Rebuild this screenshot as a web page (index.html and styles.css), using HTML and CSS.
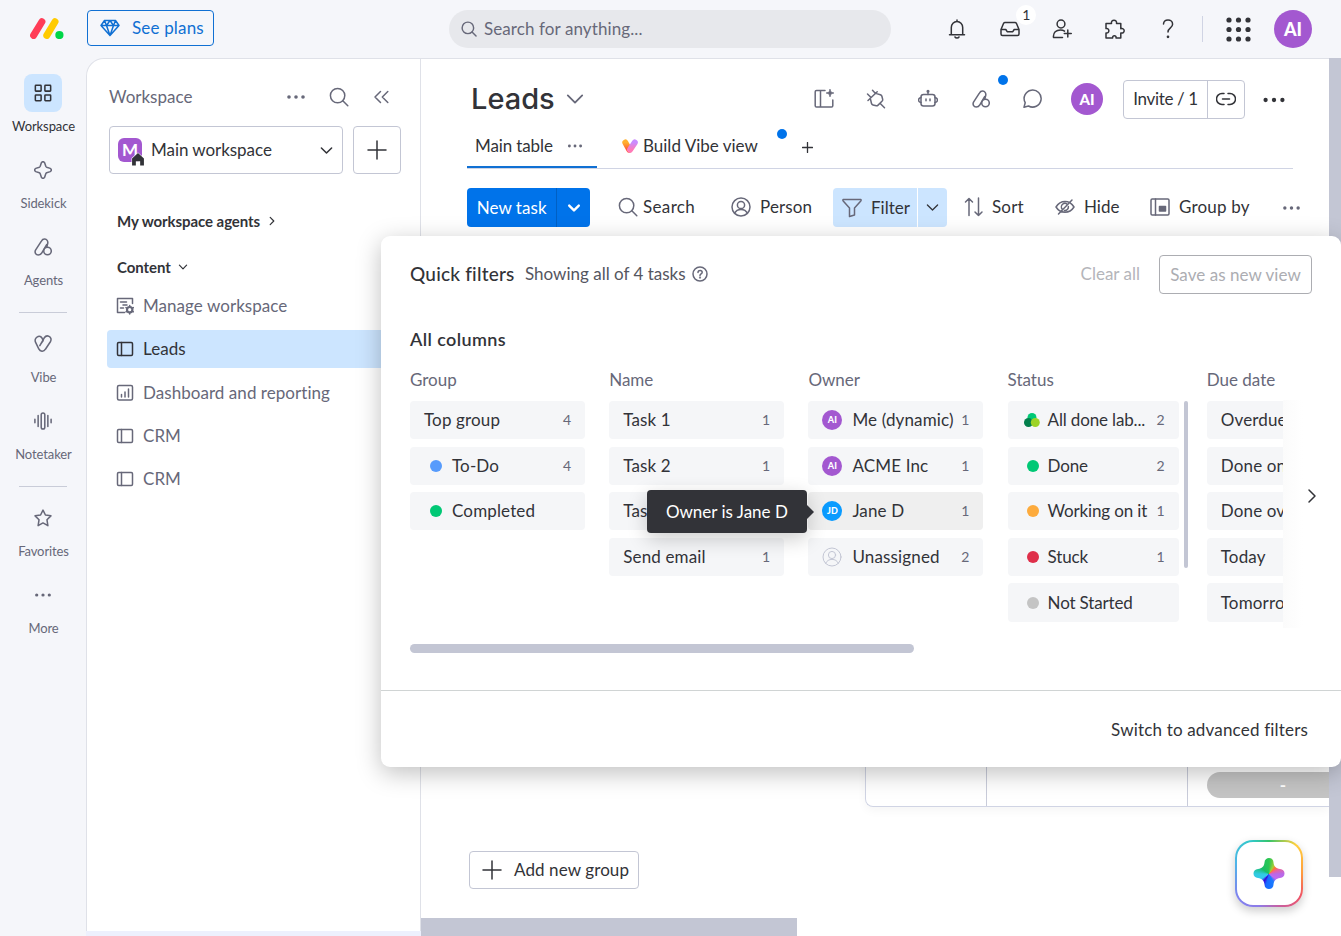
FILE: index.html
```html
<!DOCTYPE html>
<html lang="en">
<head>
  <meta charset="UTF-8">
  <meta name="viewport" content="width=device-width, initial-scale=1.0">
  <title>Leads</title>
  <link rel="stylesheet" href="styles.css">
</head>
<body>
  <!-- Icon sprite -->
  <svg class="sprite" aria-hidden="true">
    <symbol id="i-search" viewBox="0 0 20 20"><circle cx="8.6" cy="8.6" r="7.2"/><path d="M13.8 13.8L18.8 18.8"/></symbol>
    <symbol id="i-down" viewBox="0 0 20 20"><path d="M4 7l6 6 6-6"/></symbol>
    <symbol id="i-right" viewBox="0 0 20 20"><path d="M7 4l6 6-6 6"/></symbol>
    <symbol id="i-plus" viewBox="0 0 20 20"><path d="M10 1v18M1 10h18"/></symbol>
    <symbol id="i-dots" viewBox="0 0 20 20"><g fill="currentColor" stroke="none"><circle cx="3" cy="10" r="1.8"/><circle cx="10" cy="10" r="1.8"/><circle cx="17" cy="10" r="1.8"/></g></symbol>
    <symbol id="i-agents" viewBox="0 0 20 20"><path d="M14.3 9.9L15.2 6.2C15.9 3.2 14 1.3 12 1.2c-1.7-.1-3 .8-3.8 2.2L1.7 13.5c-1.2 2.3 0 5.3 3 5.3 2 0 3.2-1 4-2.4l5.5-9.2"/><circle cx="15" cy="14.5" r="4.2"/></symbol>
    <symbol id="i-board" viewBox="0 0 18 18"><rect x="1.5" y="2.5" width="15" height="13" rx="1.2"/><path d="M5.5 2.5v13"/></symbol>
    <symbol id="i-person" viewBox="0 0 20 20"><circle cx="10" cy="10" r="9"/><circle cx="10" cy="8" r="3.6"/><path d="M3.6 16.3c1.2-2.6 3.5-3.9 6.4-3.9s5.2 1.3 6.4 3.9"/></symbol>
  </svg>

  <header class="topbar">
    <svg class="logo" viewBox="0 0 34 21"><path d="M3.6 17.4L11.9 3.7" stroke="#ff3d57" stroke-width="7"/><path d="M16.8 17.4L25 3.7" stroke="#ffcb00" stroke-width="7"/><circle cx="29.4" cy="17" r="4.1" fill="#00d647" stroke="none"/></svg>
    <button class="plans-button">
      <svg viewBox="0 0 20 18"><path d="M4.5 1.5h11L19 6.5 10 16.5 1 6.5zM1 6.5h18M6.5 6.5l3.5 10 3.5-10L10 1.5 6.5 6.5 4.5 1.5M13.5 6.5l2-5"/></svg>
      <span>See plans</span>
    </button>
    <div class="global-search">
      <svg><use href="#i-search"/></svg>
      <span>Search for anything...</span>
    </div>
    <nav class="top-actions">
      <div class="top-action"><svg viewBox="0 0 20 20"><path d="M2.5 15.8h15M4.3 15.6V8.500a5.700 6 0 0 1 11.400 0v7.100M10 2.300V1M8 18c.8 1.300 3.200 1.300 4 0"/></svg></div>
      <div class="top-action"><svg viewBox="0 0 20 20"><path d="M1 10.500L3.500 4.500Q4 3.500 5 3.500h10q1 0 1.500 1L19 10.500V15q0 1.500-1.500 1.500h-15Q1 16.500 1 15zM1 10.500h4.800l1.400 2.200h5.600l1.400-2.200H19"/></svg><span class="inbox-count">1</span></div>
      <div class="top-action"><svg viewBox="0 0 20 20"><circle cx="9" cy="5" r="3.9"/><path d="M10.500 18.500H1.500c-.6-5 2.800-7.600 7-7.600 1.600 0 3 .4 4 1.200M15.800 11v7M12.300 14.500h7"/></svg></div>
      <div class="top-action"><svg viewBox="0 0 20 20"><path d="M1 4.500h5.500c-1-4.500 6-4.500 5 0h4.300v5.200c4.500-1.200 4.500 5.300 0 4.300v5H11c.8-3-4-3-3.300 0H1v-5c3.800.8 3.800-5.300 0-4.400z"/></svg></div>
      <div class="top-action"><svg viewBox="0 0 20 20"><path d="M5.500 5c.2-2.500 2-4 4.500-4s4.600 1.700 4.600 4.200c0 3.800-4.600 3.500-4.600 7.800"/><circle cx="10" cy="17.8" r=".6" fill="currentColor"/></svg></div>
      <span class="top-divider"></span>
      <svg class="apps" viewBox="0 0 25 25"><circle cx="3" cy="3" r="2.600"/><circle cx="12.500" cy="3" r="2.600"/><circle cx="22" cy="3" r="2.600"/><circle cx="3" cy="12.500" r="2.600"/><circle cx="12.500" cy="12.500" r="2.600"/><circle cx="22" cy="12.500" r="2.600"/><circle cx="3" cy="22" r="2.600"/><circle cx="12.500" cy="22" r="2.600"/><circle cx="22" cy="22" r="2.600"/></svg>
      <div class="avatar avatar-large">AI</div>
    </nav>
  </header>

  <div class="layout">
    <nav class="rail">
      <div class="rail-item active"><div class="rail-icon"><svg viewBox="0 0 20 20"><rect x="1.500" y="1.500" width="6.400" height="6.400" rx=".6"/><rect x="12.100" y="1.500" width="6.400" height="6.400" rx=".6"/><rect x="1.500" y="12.100" width="6.400" height="6.400" rx=".6"/><rect x="12.100" y="12.100" width="6.400" height="6.400" rx=".6"/></svg></div><span>Workspace</span></div>
      <div class="rail-item"><div class="rail-icon"><svg viewBox="0 0 20 20"><path d="M8.200 2q1.800-2.600 3.600 0l1.300 3.900q.3.700 1 1l3.900 1.300q2.600 1.800 0 3.600l-3.900 1.300q-.7.300-1 1l-1.300 3.900q-1.800 2.600-3.600 0l-1.300-3.900q-.3-.7-1-1L2 11.800q-2.600-1.800 0-3.600l3.900-1.300q.7-.3 1-1z"/></svg></div><span>Sidekick</span></div>
      <div class="rail-item"><div class="rail-icon"><svg><use href="#i-agents"/></svg></div><span>Agents</span></div>
      <hr>
      <div class="rail-item"><div class="rail-icon"><svg viewBox="0 0 20 20"><path d="M10.200 6.300C8.800 1.500 6.500 1 4.600 1.700 1.500 2.800.6 5.600 1.800 8.200l3.500 7.300c1.500 3 5.500 3.600 7.400.3l5.500-8.300c1.500-2.600.5-5-1.500-6-2-1-4-.3-5.300 1.600L6.500 11.800M10.200 6.300L7.500 10.200"/></svg></div><span>Vibe</span></div>
      <div class="rail-item"><div class="rail-icon"><svg viewBox="0 0 20 20"><rect x="8" y="1" width="4" height="18" rx="2"/><path d="M4.600 4v12M15.400 4v12M1 8v4M19 8v4"/></svg></div><span>Notetaker</span></div>
      <hr>
      <div class="rail-item"><div class="rail-icon"><svg viewBox="0 0 20 20"><path d="M10 1.200l2.700 5.500 6.100.9-4.400 4.300 1 6.600L10 15.500l-5.400 3 1-6.600L1.200 7.600l6.100-.9z"/></svg></div><span>Favorites</span></div>
      <div class="rail-item"><div class="rail-icon"><svg><use href="#i-dots"/></svg></div><span>More</span></div>
    </nav>

    <aside class="workspace">
      <div class="workspace-head">
        <span>Workspace</span>
        <svg><use href="#i-dots"/></svg>
        <svg><use href="#i-search"/></svg>
        <svg viewBox="0 0 20 20"><path d="M8.500 4.500L3 10l5.500 5.500M15.800 4.500L10.300 10l5.500 5.500"/></svg>
      </div>
      <div class="workspace-picker">
        <div class="picker">
          <div class="workspace-badge">M<svg viewBox="0 0 13 13"><path d="M1 6L6.500 1 12 6v6.500H8.500V8.500h-4v4H1z"/></svg></div>
          <span>Main workspace</span>
          <svg class="picker-arrow"><use href="#i-down"/></svg>
        </div>
        <button class="add-button"><svg><use href="#i-plus"/></svg></button>
      </div>
      <div class="section-title agents-title">My workspace agents <svg><use href="#i-right"/></svg></div>
      <div class="section-title">Content <svg><use href="#i-down"/></svg></div>
      <ul class="boards">
        <li><svg viewBox="0 0 18 18"><path d="M8.500 15.500H1.500v-14h15v5M4.500 5h6M7 8h4M4.500 11h3"/><circle cx="13.700" cy="12.700" r="2.700" stroke-width="2.200"/><path d="M13.700 8.500v1M13.700 16v1M10 10.600l.8.500M16.600 14.300l.8.500M17.400 10.600l-.8.500M10.800 14.300l-.8.500"/></svg>Manage workspace</li>
        <li class="selected"><svg><use href="#i-board"/></svg>Leads</li>
        <li><svg viewBox="0 0 18 18"><rect x="1.500" y="1.500" width="15" height="14.500" rx="1.500"/><path d="M5.500 10.500v2.500M9 8v5M12.500 5v8"/></svg>Dashboard and reporting</li>
        <li><svg><use href="#i-board"/></svg>CRM</li>
        <li><svg><use href="#i-board"/></svg>CRM</li>
      </ul>
    </aside>

    <main class="board">
      <div class="board-head">
        <h1>Leads</h1>
        <svg class="title-arrow"><use href="#i-down"/></svg>
        <div class="board-actions">
          <div><svg viewBox="0 0 20 20"><path d="M11 1.500H2.500q-1.300 0-1.300 1.300v14q0 1.300 1.300 1.300h15q1.300 0 1.300-1.300V11M6.500 1.500v16.600"/><path d="M16 0l1 3 3 1-3 1-1 3-1-3-3-1 3-1z" fill="currentColor" stroke-width=".6"/></svg></div>
          <div><svg viewBox="0 0 20 20"><path d="M2 11.500L11.200 2.800M1.500 5l3.300 3.300M6.500 1.200l3 3.200M4.300 9.300l1.200 5.200q.3 1.200 1.500 1.500l3.300.8q.9.200 1.500-.4l4.400-4.400q.7-.6.500-1.500l-.8-3.200q-.3-1.100-1.500-1.500L9.700 4.400M14.500 14.700l4 4"/></svg></div>
          <div><svg viewBox="0 0 20 20"><rect x="3" y="5.500" width="14" height="11.500" rx="2.500"/><path d="M10 5.500V2.500M8 10v1.800M12 10v1.800M3 8.500Q.5 9 .5 11t2.500 2.500M17 8.500q2.500.5 2.500 2.500T17 13.500"/><circle cx="10" cy="2.300" r=".8"/></svg></div>
          <div><svg class="agents-icon"><use href="#i-agents"/></svg><i class="dot"></i></div>
          <div><svg viewBox="0 0 20 20"><path d="M1 18.200l1.200-4.500a8.500 8.500 0 1 1 3.300 3.300z"/></svg></div>
        </div>
        <div class="avatar">AI</div>
        <div class="invite"><span>Invite / 1</span><span class="link"><svg viewBox="0 0 20 20"><path d="M8 4.500H6a5.500 5.500 0 0 0 0 11h2M12 4.500h2a5.500 5.500 0 0 1 0 11h-2M6.500 10h7"/></svg></span></div>
        <svg class="board-more"><use href="#i-dots"/></svg>
      </div>

      <div class="tabs">
        <div class="tab active"><span>Main table</span><svg><use href="#i-dots"/></svg></div>
        <div class="tab vibe">
          <svg viewBox="0 0 16 14"><defs><linearGradient id="warm" x2="0" y2="1"><stop stop-color="#ffb02e"/><stop offset="1" stop-color="#ff5a36"/></linearGradient><linearGradient id="pink" x2="0" y2="1"><stop stop-color="#c98bff"/><stop offset="1" stop-color="#ff7ab8"/></linearGradient></defs><path d="M3.300 3.500l4 7.200" stroke="url(#warm)"/><path d="M12.800 3.500l-4.700 7.200" stroke="url(#pink)"/></svg>
          <span>Build Vibe view</span><i class="dot"></i>
        </div>
        <svg class="tab-add"><use href="#i-plus"/></svg>
      </div>

      <div class="toolbar">
        <div class="new-task"><span>New task</span><span class="new-task-arrow"><svg><use href="#i-down"/></svg></span></div>
        <div class="tool tool-search"><svg><use href="#i-search"/></svg>Search</div>
        <div class="tool tool-person"><svg><use href="#i-person"/></svg>Person</div>
        <div class="filter"><span><svg viewBox="0 0 20 20"><path d="M1.200 1.500h17.600q.6.800 0 1.500L12.500 10v7l-5 1.500V10L1.200 3q-.6-.7 0-1.500z"/></svg>Filter</span><span class="filter-arrow"><svg><use href="#i-down"/></svg></span></div>
        <div class="tool tool-sort"><svg viewBox="0 0 20 20"><path d="M5 18.500V1.500M1.500 5l3.500-3.500L8.500 5M14.500 1v17.500M11 15l3.500 3.500L18 15"/></svg>Sort</div>
        <div class="tool tool-hide"><svg viewBox="0 0 20 20"><path d="M1 10c4.500-7.500 13.500-7.500 18 0-4.500 7-13.500 7-18 0zM3.500 17L17 3M12.500 7.500a3.500 3.500 0 0 0-5.200 4.700M13.400 9.500a3.500 3.500 0 0 1-4 3.900"/></svg>Hide</div>
        <div class="tool tool-group"><svg viewBox="0 0 20 20"><rect x="1" y="2" width="18" height="16" rx="1.200"/><path d="M5.500 2v16"/><rect x="9.500" y="9.500" width="6" height="4.500" fill="currentColor"/></svg>Group by</div>
        <svg class="tool-more"><use href="#i-dots"/></svg>
      </div>

      <div class="table">
        <div class="cell"></div>
        <div class="cell"></div>
        <div class="cell"><div class="summary">-</div></div>
      </div>
      <button class="add-group"><svg><use href="#i-plus"/></svg>Add new group</button>
      <div class="scroll-x"></div>
    </main>
    <div class="scroll-y"></div>
  </div>

  <section class="popover">
    <div class="popover-head">
      <h2>Quick filters</h2>
      <span class="showing">Showing all of 4 tasks</span>
      <svg viewBox="0 0 16 16"><circle cx="8" cy="8" r="7"/><path d="M6 6.500c0-2.900 4.200-2.600 4.200-.2C10.200 8 8 7.700 8 9.500"/><circle cx="8" cy="11.600" r=".4"/></svg>
      <span class="clear-all">Clear all</span>
      <button class="save-view">Save as new view</button>
    </div>
    <h3>All columns</h3>
    <div class="columns-wrap">
      <div class="columns">
        <div class="column">
          <h4>Group</h4>
          <div class="option"><span>Top group</span><em>4</em></div>
          <div class="option status"><i class="blue"></i><span>To-Do</span><em>4</em></div>
          <div class="option status"><i class="green"></i><span>Completed</span></div>
        </div>
        <div class="column">
          <h4>Name</h4>
          <div class="option"><span>Task 1</span><em>1</em></div>
          <div class="option"><span>Task 2</span><em>1</em></div>
          <div class="option"><span>Task 3</span></div>
          <div class="option"><span>Send email</span><em>1</em></div>
        </div>
        <div class="column">
          <h4>Owner</h4>
          <div class="option"><b class="mini">AI</b><span>Me (dynamic)</span><em>1</em></div>
          <div class="option"><b class="mini">AI</b><span>ACME Inc</span><em>1</em></div>
          <div class="option hovered"><b class="mini jd">JD</b><span>Jane D</span><em>1</em><div class="tooltip">Owner is Jane D</div></div>
          <div class="option"><svg class="nobody"><use href="#i-person"/></svg><span>Unassigned</span><em>2</em></div>
        </div>
        <div class="column scrollable">
          <h4>Status</h4>
          <div class="option status"><svg class="done-labels" viewBox="0 0 16 14"><circle cx="8" cy="4.500" r="4.500" fill="#00c875"/><circle cx="4.500" cy="9.500" r="4.500" fill="#037f4c"/><circle cx="11.300" cy="9.500" r="4.500" fill="#9cd326"/></svg><span>All done lab...</span><em>2</em></div>
          <div class="option status"><i class="green"></i><span>Done</span><em>2</em></div>
          <div class="option status"><i class="orange"></i><span>Working on it</span><em>1</em></div>
          <div class="option status"><i class="red"></i><span>Stuck</span><em>1</em></div>
          <div class="option status"><i class="gray"></i><span>Not Started</span></div>
          <div class="column-scroll"></div>
        </div>
        <div class="column">
          <h4>Due date</h4>
          <div class="option"><span>Overdue</span></div>
          <div class="option"><span>Done on time</span></div>
          <div class="option"><span>Done overdue</span></div>
          <div class="option"><span>Today</span></div>
          <div class="option"><span>Tomorrow</span></div>
        </div>
      </div>
      <svg class="columns-next"><use href="#i-right"/></svg>
    </div>
    <div class="columns-scroll"></div>
    <footer>Switch to advanced filters</footer>
  </section>

  <div class="sidekick"><div class="star"></div></div>
</body>
</html>
```
FILE: styles.css
```css
* {
  margin: 0;
  padding: 0;
  box-sizing: border-box;
}

body {
  position: relative;
  width: 1341px;
  height: 936px;
  overflow: hidden;
  display: flex;
  flex-direction: column;
  font-family: Lato, "Liberation Sans", sans-serif;
  font-size: 17px;
  line-height: 20px;
  color: #323338;
  background: #f5f6fa;
  white-space: nowrap;
}

button {
  font: inherit;
  letter-spacing: inherit;
  color: inherit;
  background: white;
  border: 1px solid #c3c6d4;
  border-radius: 4px;
}

svg {
  display: block;
  flex: none;
  width: 20px;
  height: 20px;
  fill: none;
  stroke: currentColor;
  stroke-width: 1.5;
  stroke-linecap: round;
  stroke-linejoin: round;
}

.sprite {
  display: none;
}

.avatar {
  flex: none;
  width: 32px;
  height: 32px;
  border-radius: 50%;
  background: #a358d0;
  color: white;
  font-weight: 900;
  font-size: 15px;
  line-height: 32px;
  text-align: center;
}

.avatar-large {
  width: 38px;
  height: 38px;
  font-size: 18px;
  line-height: 38px;
}

.dot {
  position: absolute;
  width: 10px;
  height: 10px;
  border-radius: 50%;
  background: #0073ea;
}

/* Top bar */
.topbar {
  flex: none;
  height: 58px;
  padding: 0 29px 0 30px;
  display: flex;
  align-items: center;
}

.logo {
  width: 34px;
  height: 21px;
  margin-top: -2px;
}

.plans-button {
  width: 127px;
  height: 36px;
  margin: -2px 0 0 23px;
  padding-left: 12px;
  display: flex;
  align-items: center;
  gap: 12px;
  background: transparent;
  border-color: #1070d3;
  color: #1070d3;
  letter-spacing: 0.17px;
}

.plans-button svg {
  width: 20px;
  height: 18px;
}

.global-search {
  width: 442px;
  height: 38px;
  margin-left: 235px;
  padding-left: 12px;
  display: flex;
  align-items: center;
  gap: 7px;
  border-radius: 19px;
  background: #e7e8ec;
  color: #676879;
  letter-spacing: 0.1px;
}

.global-search svg {
  width: 16px;
  height: 16px;
  stroke-width: 1.8;
}

.top-actions {
  display: flex;
  align-items: center;
  margin-left: 40px;
}

.top-action {
  position: relative;
  width: 52.7px;
  display: flex;
  justify-content: center;
}

.inbox-count {
  position: absolute;
  left: 33px;
  top: -14px;
  width: 20px;
  height: 20px;
  border-radius: 50%;
  background: white;
  font-size: 14px;
  text-align: center;
}

.top-divider {
  width: 1px;
  height: 26px;
  margin-left: 8px;
  background: #d0d4e4;
}

.apps {
  width: 25px;
  height: 25px;
  margin: 0 23px;
  fill: currentColor;
  stroke: none;
}

/* Left rail */
.layout {
  flex: 1;
  display: flex;
}

.rail {
  width: 86px;
  padding-top: 16px;
  color: #676879;
}

.rail-item {
  height: 77px;
  display: flex;
  flex-direction: column;
  align-items: center;
  gap: 6px;
  font-size: 13px;
  line-height: 17px;
  letter-spacing: -0.1px;
}

.rail-item.active {
  color: #323338;
}

.rail-item span {
  margin-left: 1px;
}

.rail-icon {
  width: 38px;
  height: 38px;
  border-radius: 8px;
  display: flex;
  align-items: center;
  justify-content: center;
}

.active .rail-icon {
  background: #cce5ff;
}

.rail-icon svg {
  width: 18px;
  height: 18px;
  stroke-width: 1.7;
}

.rail hr {
  width: 48px;
  height: 1px;
  margin: 7px auto 12px;
  border: 0;
  background: #c9ccd8;
}

/* Workspace panel */
.workspace {
  width: 335px;
  height: 873px;
  padding-left: 22px;
  border: 1px solid #dfe1e8;
  border-bottom: 0;
  border-top-left-radius: 18px;
  background: white;
  box-shadow: 0 5px 0 #edf0fd;
}

.workspace-head {
  height: 67px;
  padding: 9px 28px 0 0;
  display: flex;
  align-items: center;
  color: #676879;
}

.workspace-head span {
  flex: 1;
}

.workspace-head svg {
  margin-left: 23px;
}

.workspace-picker {
  display: flex;
  gap: 10px;
}

.picker {
  width: 234px;
  height: 48px;
  padding: 0 8px;
  display: flex;
  align-items: center;
  border: 1px solid #c3c6d4;
  border-radius: 4px;
  letter-spacing: -0.05px;
}

.picker-arrow {
  width: 17px;
  height: 17px;
  margin-left: auto;
  margin-right: -1px;
  stroke-width: 1.8;
}

.workspace-badge {
  position: relative;
  width: 24px;
  height: 24px;
  margin-right: 9px;
  border-radius: 6px;
  background: #a358d0;
  color: white;
  font-weight: bold;
  line-height: 23px;
  text-align: center;
}

.workspace-badge svg {
  position: absolute;
  left: 13px;
  top: 14px;
  width: 14px;
  height: 14px;
  fill: #323338;
  stroke: white;
  stroke-width: 1;
  paint-order: stroke;
}

.add-button {
  width: 48px;
  height: 48px;
  display: flex;
  align-items: center;
  justify-content: center;
}

.section-title {
  margin: 26px 0 0 8px;
  display: flex;
  align-items: center;
  gap: 6px;
  font-size: 15px;
  font-weight: bold;
  letter-spacing: -0.07px;
}

.section-title svg {
  width: 12px;
  height: 12px;
  stroke-width: 2;
}

.agents-title {
  margin-top: 37px;
}

.boards {
  margin: 10px 0 0 -2px;
  list-style: none;
  color: #676879;
  letter-spacing: 0.05px;
}

.boards li {
  height: 38px;
  margin-bottom: 5.3px;
  padding-left: 9px;
  display: flex;
  align-items: center;
  gap: 9px;
}

.boards svg {
  width: 18px;
  height: 18px;
}

.boards .selected {
  background: #cce5ff;
  color: #323338;
  border-radius: 4px;
}

/* Board */
.board {
  width: 908px;
  padding-left: 46px;
  border-top: 1px solid #dfe1e8;
  background: white;
  overflow: hidden;
  display: flex;
  flex-direction: column;
}

.board-head {
  height: 80px;
  display: flex;
  align-items: center;
}

h1 {
  width: 85px;
  margin-left: 4px;
  font-family: Inter, Lato, sans-serif;
  font-size: 29px;
  font-weight: 550;
  line-height: 36px;
}

.title-arrow {
  width: 24px;
  height: 24px;
  margin-left: 7px;
  color: #676879;
}

.board-actions {
  display: flex;
  margin-left: 211px;
  color: #676879;
}

.board-actions div {
  position: relative;
  width: 52.2px;
  display: flex;
  justify-content: center;
}

.board-actions .agents-icon {
  width: 18px;
  height: 18px;
  margin-top: 1px;
  stroke-width: 1.7;
}

.board-actions .dot {
  right: -1px;
  top: -14px;
}

.board-head .avatar {
  margin-left: 12px;
}

.invite {
  width: 122px;
  height: 39px;
  margin-left: 20px;
  display: flex;
  align-items: center;
  border: 1px solid #c3c6d4;
  border-radius: 4px;
  letter-spacing: -0.35px;
}

.invite span {
  width: 84px;
  text-align: center;
}

.invite .link {
  width: 37px;
  height: 37px;
  border-left: 1px solid #c3c6d4;
  display: flex;
  align-items: center;
  justify-content: center;
}

.board-more {
  width: 24px;
  height: 24px;
  margin: 1px 0 0 17px;
}

.tabs {
  height: 30px;
  width: 826px;
  display: flex;
  border-bottom: 1px solid #d0d4e4;
}

.tab {
  position: relative;
  height: 29px;
  padding: 0 8px;
  display: flex;
  align-items: flex-start;
}

.tab.active {
  width: 130px;
  justify-content: space-between;
  border-bottom: 2px solid #1070d3;
}

.tab.active svg {
  width: 16px;
  height: 16px;
  margin: -1px 6px 0 0;
  color: #676879;
}

.tab span {
  margin-top: -3px;
}

.tab.active span {
  letter-spacing: -0.12px;
}

.vibe {
  width: 185px;
  margin-left: 17px;
  gap: 5px;
}

.vibe svg {
  width: 16px;
  height: 14px;
  stroke-width: 6;
}

.vibe .dot {
  right: 12px;
  top: -10px;
}

.tab-add {
  width: 11px;
  height: 11px;
  margin: 3px 0 0 3px;
  stroke-width: 2.4;
}

.toolbar {
  height: 39px;
  margin-top: 19px;
  display: flex;
}

.new-task {
  width: 123px;
  height: 39px;
  display: flex;
  align-items: center;
  background: #0073ea;
  border-radius: 4px;
  color: white;
  letter-spacing: 0.05px;
}

.new-task span {
  width: 90px;
  text-align: center;
}

.new-task .new-task-arrow {
  width: 34px;
  height: 39px;
  display: flex;
  align-items: center;
  justify-content: center;
  border-left: 1px solid #0060c4;
}

.new-task svg {
  width: 16px;
  height: 16px;
  stroke-width: 3;
}

.tool {
  height: 38px;
  display: flex;
  align-items: center;
}

.tool svg {
  color: #676879;
}

.tool-search {
  width: 112px;
  margin-left: 28px;
  gap: 5px;
  letter-spacing: 0.35px;
}

.tool-person {
  width: 102px;
  margin-left: 1px;
  gap: 9px;
  letter-spacing: 0.15px;
}

.filter {
  width: 114px;
  height: 39px;
  display: flex;
  background: #cce5ff;
  border-radius: 4px;
}

.filter span {
  width: 84px;
  padding-left: 9px;
  display: flex;
  align-items: center;
  gap: 9px;
}

.filter span svg {
  color: #676879;
}

.filter .filter-arrow {
  width: 30px;
  padding-left: 6px;
  border-left: 1px solid white;
}

.filter .filter-arrow svg {
  width: 17px;
  height: 17px;
  color: #323338;
}

.tool-sort {
  width: 90px;
  margin-left: 17px;
  gap: 8px;
  letter-spacing: 0.2px;
}

.tool-hide {
  width: 95px;
  margin-left: 1px;
  gap: 9px;
}

.tool-group {
  width: 132px;
  gap: 9px;
  letter-spacing: 0.2px;
}

.tool-more {
  width: 19px;
  margin-top: 10px;
  color: #676879;
}

.table {
  flex: none;
  width: 464px;
  height: 181px;
  margin: 399px 0 0 398px;
  display: flex;
  border: 1px solid #d0d4e4;
  border-right: 0;
  border-radius: 0 0 0 8px;
  box-shadow: 0 4px 10px rgba(0,0,0,0.04);
}

.cell {
  flex: none;
  width: 201px;
  border-right: 1px solid #c9ccda;
}

.cell:first-child {
  width: 121px;
}

.cell:last-child {
  width: 141px;
  border: 0;
  display: flex;
  align-items: flex-end;
  padding: 0 0 8px 19px;
}

.summary {
  flex: none;
  width: 152px;
  height: 26px;
  border-radius: 13px;
  background: #c4c4c4;
  color: white;
  font-weight: bold;
  line-height: 26px;
  text-align: center;
}

.add-group {
  flex: none;
  width: 170px;
  height: 38px;
  margin: 44px 0 0 2px;
  padding-left: 12px;
  display: flex;
  align-items: center;
  gap: 12px;
  letter-spacing: 0.1px;
}

.scroll-x {
  flex: none;
  width: 376px;
  height: 18px;
  margin: 29px 0 0 -46px;
  background: #c3c6d4;
}

.scroll-y {
  width: 12px;
  background: linear-gradient(#c3c6d4 819px, white 819px);
}

/* Quick filters */
.popover {
  position: absolute;
  left: 381px;
  top: 236px;
  width: 960px;
  height: 531px;
  border-radius: 9px;
  background: white;
  box-shadow: 0 6px 24px rgba(0,0,0,0.25);
  display: flex;
  flex-direction: column;
}

.popover-head {
  height: 76px;
  padding: 0 29px;
  display: flex;
  align-items: center;
}

.popover-head svg {
  width: 16px;
  height: 16px;
  margin-left: 6px;
  color: #676879;
}

h2 {
  width: 115px;
  margin-top: -1px;
  font-size: 19px;
  font-weight: 500;
  letter-spacing: 0.2px;
}

.showing {
  color: #55565f;
}

.clear-all {
  margin-left: auto;
  color: #b4b5ba;
}

.save-view {
  width: 153px;
  height: 39px;
  margin: 1px 0 0 19px;
  border-color: #acadb2;
  color: #acadb2;
  letter-spacing: 0.05px;
}

h3 {
  margin: 17px 0 0 29px;
  font-size: 18px;
  font-weight: 600;
  letter-spacing: 0.4px;
}

.columns-wrap {
  margin: 21px 0 0 29px;
  display: flex;
  align-items: center;
  background: linear-gradient(90deg, #fbfbfb, white) 873px 30px / 20px 230px no-repeat;
}

.columns {
  width: 873px;
  height: 258px;
  display: flex;
  gap: 24.2px;
  overflow: hidden;
}

.column {
  flex: none;
  width: 175px;
  display: flex;
  flex-direction: column;
  gap: 7.3px;
}

h4 {
  height: 23.7px;
  font-size: 17px;
  font-weight: normal;
  color: #676879;
}

.option {
  position: relative;
  flex: none;
  height: 38.3px;
  padding: 0 14px;
  display: flex;
  align-items: center;
  border-radius: 4px;
  background: #f5f6f8;
}

.option.hovered {
  background: #efefef;
}

.option em {
  margin-left: auto;
  font-style: normal;
  font-size: 14px;
  color: #676879;
}

.option span {
  letter-spacing: 0.15px;
}

.status i {
  width: 12px;
  height: 12px;
  margin: 0 10px 0 6px;
  border-radius: 50%;
}

.blue { background: #579bfc; }
.green { background: #00c875; }
.orange { background: #fdab3d; }
.red { background: #df2f4a; }
.gray { background: #c4c4c4; }

.mini {
  width: 20px;
  height: 20px;
  margin-right: 10px;
  border-radius: 50%;
  background: #a358d0;
  color: white;
  font-size: 9px;
  font-weight: 900;
  text-align: center;
}

.mini.jd {
  background: #0a9bff;
}

.nobody {
  margin-right: 10px;
  color: #c3c6d4;
  stroke-width: 1;
}

.scrollable {
  position: relative;
}

.scrollable .option {
  width: 171px;
  padding-left: 13px;
}

.scrollable .option span {
  letter-spacing: -0.15px;
}

.scrollable .status i {
  margin-right: 9px;
}

.done-labels {
  width: 16px;
  height: 14px;
  margin: 0 8px 0 3px;
  stroke: none;
}

.column-scroll {
  position: absolute;
  right: -5px;
  top: 31px;
  width: 4px;
  height: 167px;
  border-radius: 2px;
  background: #c3c6d4;
}

.columns-next {
  margin: -6px 0 0 19px;
}

.tooltip {
  position: absolute;
  right: 176.5px;
  top: -2px;
  z-index: 1;
  width: 160px;
  height: 43px;
  border-radius: 4px;
  background: #323338;
  color: white;
  line-height: 43px;
  text-align: center;
  box-shadow: 0 6px 20px rgba(0,0,0,0.2);
}

.tooltip::after {
  content: "";
  position: absolute;
  right: -7px;
  top: 14px;
  border-left: 8px solid #323338;
  border-top: 8px solid transparent;
  border-bottom: 8px solid transparent;
}

.columns-scroll {
  width: 504px;
  height: 9px;
  margin: 16px 0 0 29px;
  border-radius: 5px;
  background: #c3c6d4;
}

footer {
  height: 77px;
  margin-top: auto;
  padding-right: 33px;
  border-top: 1px solid #d0d4d4;
  line-height: 77px;
  text-align: right;
  letter-spacing: 0.18px;
}

/* Floating assistant button */
.sidekick {
  position: absolute;
  left: 1235px;
  top: 840px;
  width: 68px;
  height: 67px;
  border: 2px solid transparent;
  border-radius: 18px;
  background: linear-gradient(white, white) padding-box, conic-gradient(#35c46a, #ffcf3d 12%, #ff9a3d 25%, #ee5366 35%, #c85fa0 45%, #8d7be8 55%, #7f83ee 65%, #4db5e8 80%, #32c8c8 92%, #35c46a) border-box;
  box-shadow: 0 4px 10px rgba(0,0,0,0.2);
  display: flex;
  align-items: center;
  justify-content: center;
}

.star {
  width: 32px;
  height: 32px;
  background: conic-gradient(#2bc653, #a5cf36 8%, #ff7a2f 12%, #f06292 17%, #b968e8 25%, #c169ef 35%, #1a7cff 42%, #1669ff 54%, #3a00d6 60%, #35c9f0 66%, #30cbe0 75%, #18bd6a 85%, #2bc653);
  clip-path: path("M11.500 5 C11.500 -1 20.500 -1 20.500 5 C21 9 23 11 27 11.500 C33 11.500 33 20.500 27 20.500 C23 21 21 23 20.500 27 C20.500 33 11.500 33 11.500 27 C11 23 9 21 5 20.500 C-1 20.500 -1 11.500 5 11.500 C9 11 11 9 11.500 5 Z");
}
```
